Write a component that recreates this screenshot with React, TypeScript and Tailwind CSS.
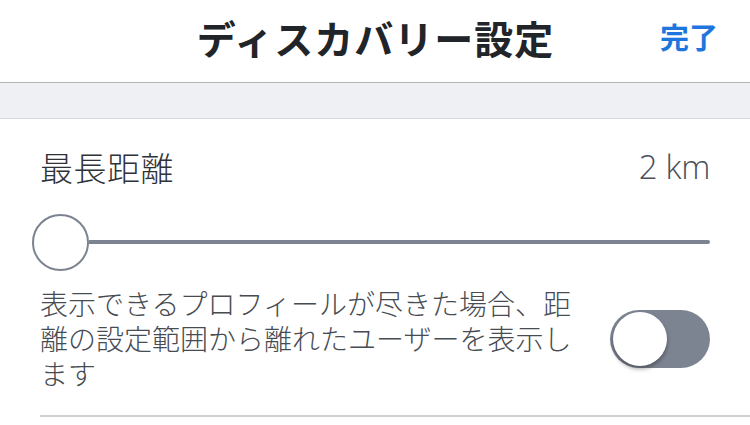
import React from "react";

export default function App() {
  const jp = { fontFamily: '"Noto Sans CJK JP", "Noto Sans", sans-serif' };
  return (
    <div className="w-[750px] h-[425px] bg-white overflow-hidden" style={jp}>
      <div className="relative h-[83px] border-b border-[#b4b4b4] flex items-center justify-center">
        <div className="text-[39px] font-bold text-[#212428] tracking-[1px] leading-none -mt-[7px] pl-[1px]">ディスカバリー設定</div>
        <div className="absolute right-[32px] top-[22px] text-[29px] font-bold text-[#1f75de] leading-none">完了</div>
      </div>
      <div className="h-[36px] bg-[#eff0f4] border-b border-[#d7dadf]" />
      <div className="pl-[40px]">
        <div className="pr-[40px]">
          <div className="flex items-center justify-between pt-[28px] h-[68px]">
            <div className="text-[33px] text-[#2f3237] font-light leading-[40px] tracking-[0.5px]">最長距離</div>
            <div className="text-[33px] text-[#4a505b] leading-[40px] tracking-[-0.3px]" style={{ fontFamily: '"Open Sans", "Liberation Sans", sans-serif', fontWeight: 300 }}>2 km</div>
          </div>
          <div className="mt-[26px] flex items-center h-[58px] -ml-[8px]">
            <div className="w-[57px] h-[57px] rounded-full border-2 border-[#7d8491] bg-white shrink-0" />
            <div className="flex-1 h-[4px] bg-[#7d8491] rounded-r-full" />
          </div>
          <div className="mt-[15px] flex items-center justify-between">
            <p className="w-[540px] text-[28px] leading-[35px] text-[#474b52] font-light">
              表示できるプロフィールが尽きた場合、距離の設定範囲から離れたユーザーを表示します
            </p>
            <div className="relative w-[100px] h-[58px] rounded-full bg-[#7d8491] shrink-0">
              <div className="absolute left-[3px] top-[2px] w-[54px] h-[54px] rounded-full bg-white shadow-[0_3px_4px_rgba(0,0,0,0.35)]" />
            </div>
          </div>
        </div>
        <div className="mt-[24px] h-[2px] bg-[#cfcfcf]" />
      </div>
    </div>
  );
}
